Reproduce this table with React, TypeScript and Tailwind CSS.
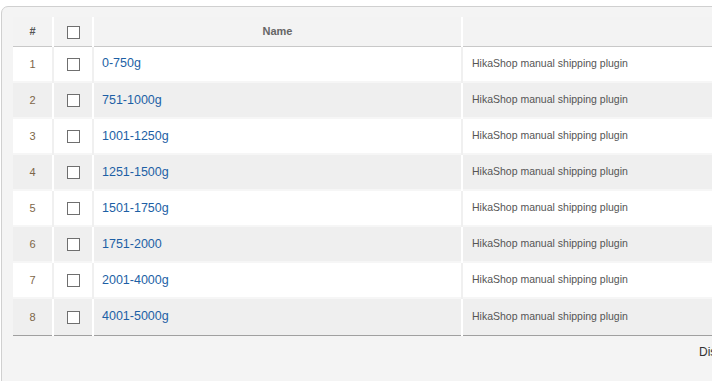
import React from "react";

const rows = [
  "0-750g",
  "751-1000g",
  "1001-1250g",
  "1251-1500g",
  "1501-1750g",
  "1751-2000",
  "2001-4000g",
  "4001-5000g",
];

function Box() {
  return <span className="inline-block h-[13px] w-[13px] border border-[#6f6f6f] bg-white align-middle" />;
}

export default function App() {
  return (
    <div className="h-[381px] w-[712px] overflow-hidden bg-white pl-[1px] pt-[6px]" style={{ fontFamily: '"Liberation Sans", Arial, sans-serif' }}>
      <div className="h-[420px] w-[800px] rounded-tl-[7px] border border-[#d0d0d0] bg-[#f4f4f4] pl-[11px] pt-[10px]">
        <table className="w-[760px] table-fixed border-collapse text-[#555]">
          <colgroup>
            <col className="w-[40px]" />
            <col className="w-[40px]" />
            <col className="w-[369px]" />
            <col />
          </colgroup>
          <thead>
            <tr className="h-[29px] border-b border-[#c8c8c8] bg-[#f3f3f3] text-[11px] font-bold">
              <th className="border-r-2 border-white text-center font-bold text-[#555]">#</th>
              <th className="border-r-2 border-white text-center"><Box /></th>
              <th className="border-r-2 border-white text-center text-[#666]">Name</th>
              <th></th>
            </tr>
          </thead>
          <tbody>
            {rows.map((r, i) => (
              <tr
                key={r}
                className={`${i === rows.length - 1 ? "h-[37px] border-b border-b-[#a0a0a0]" : "h-[36px] border-b-2 border-b-[#f6f6f6]"} ${i % 2 === 0 ? "bg-white" : "bg-[#efefef]"}`}
              >
                <td className={`border-r-2 text-center text-[11px] text-[#7d6648] ${i % 2 === 0 ? "border-[#f0f0f0]" : "border-white"}`}>{i + 1}</td>
                <td className={`border-r-2 text-center ${i % 2 === 0 ? "border-[#f0f0f0]" : "border-white"}`}><Box /></td>
                <td className={`border-r-2 pl-[8px] text-[12.5px] text-[#1d5fa5] ${i % 2 === 0 ? "border-[#f0f0f0]" : "border-white"}`}>{r}</td>
                <td className="pl-[9px] text-[10.5px] text-[#555]">HikaShop manual shipping plugin</td>
              </tr>
            ))}
          </tbody>
        </table>
        <div className="w-[699px] pt-[7px] text-right text-[12px] text-[#333]">
          <span className="inline-block w-[13px] overflow-hidden whitespace-nowrap align-top">Display</span>
        </div>
      </div>
    </div>
  );
}
